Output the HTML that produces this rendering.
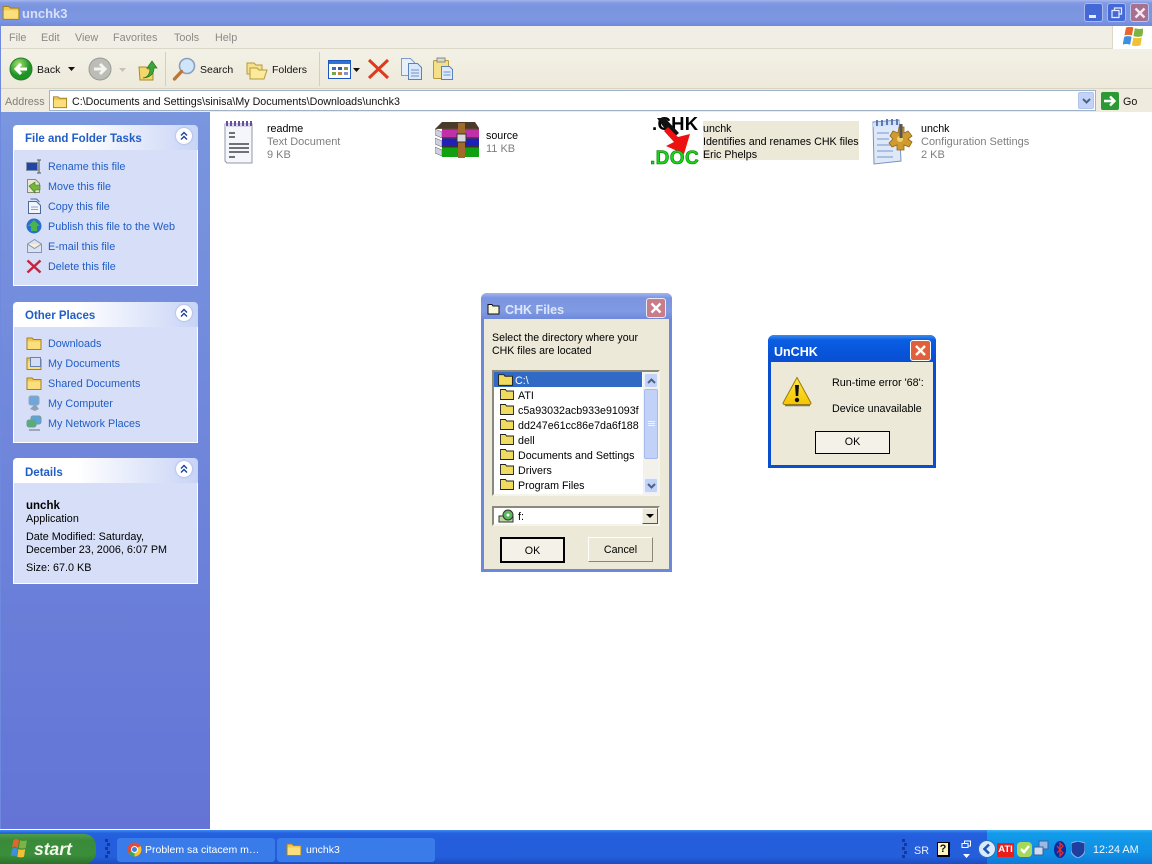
<!DOCTYPE html>
<html><head><meta charset="utf-8"><title>unchk3</title>
<style>
html,body{margin:0;padding:0;width:1152px;height:864px;overflow:hidden;background:#fff}
body{position:relative;font-family:"Liberation Sans",sans-serif;font-size:10.7px;color:#000}
div,span,svg{position:absolute}
.t{white-space:nowrap;line-height:14px;margin-top:1px}
.m{color:#8a8a86;top:30px;font-size:10.8px}
.tb{top:62px;font-size:10.5px;color:#111}
.p{left:13px;width:185px;background:#d6dff7;border:solid #fff;border-width:0 1px 1px 1px;box-sizing:border-box}
.ph{left:13px;width:185px;height:25px;background:linear-gradient(90deg,#fff 0,#fff 35%,#c8d4f6 100%);border-radius:4px 4px 0 0}
.pt{left:25px;font-weight:bold;color:#215dc6;font-size:11.5px}
.l{left:48px;color:#215dc6;font-size:10.8px}
.chev{left:176px;width:16px;height:16px;background:#fff;border-radius:50%;box-shadow:0 0 2px #8fa3dc}
.g{color:#7f7f7f;font-size:11px}
.d{font-size:10.8px}
.btn{background:#f3f1e8;border:1px solid #000;box-sizing:border-box;text-align:center;font-size:10.7px}
</style></head>
<body>
<svg width="0" height="0" style="position:absolute">
<symbol id="fld" viewBox="0 0 16 16"><path d="M1 3h5l1.500 1.500H15v10H1z" fill="#f2c94e" stroke="#a5801f"/><path d="M1.500 6.500h13v7.500h-13z" fill="#fbdf7c"/></symbol>
<symbol id="y" viewBox="0 0 14 12"><path d="M.5 1.500h5l1 1.500h7v8.500H.5z" fill="#eedb60" stroke="#222" stroke-width=".9"/></symbol>
<symbol id="chv" viewBox="0 0 16 16"><path d="M5 7.500l3-3 3 3M5 11.500l3-3 3 3" fill="none" stroke="#1d3f9c" stroke-width="1.400"/></symbol>
</svg>

<!-- window frame -->
<div style="left:0;top:0;width:1152px;height:830px;background:#6f89de"></div>
<div style="left:1px;top:112px;width:209px;height:717px;background:linear-gradient(180deg,#7a96df,#6374d6)"></div>
<div style="left:210px;top:112px;width:942px;height:717px;background:#fff"></div>
<div style="left:0;top:829px;width:1152px;height:1px;background:#fff"></div>
<div style="left:0;top:0;width:1152px;height:26px;background:linear-gradient(180deg,#a4b6ee 0,#8099e2 3px,#7b94df 8px,#7c97e2 20px,#7089dc 26px)"></div>
<svg style="left:2px;top:3px" width="18" height="18"><use href="#fld"/></svg>
<div class="t" style="left:22px;top:6px;color:#d8e0f8;font-weight:bold;font-size:13px">unchk3</div>

<!-- window buttons -->
<div style="left:1084px;top:3px;width:19px;height:19px;background:#4468d6;border:1px solid #a9b9ee;border-radius:3px;box-sizing:border-box"><div style="left:4px;top:11px;width:7px;height:3px;background:#e8edfb"></div></div>
<div style="left:1107px;top:3px;width:19px;height:19px;background:#4468d6;border:1px solid #a9b9ee;border-radius:3px;box-sizing:border-box"><svg style="left:3px;top:3px" width="12" height="12"><path d="M3.500 3V1h7v6H8M1 3.500h7v7H1z" fill="none" stroke="#e8edfb" stroke-width="1.200"/></svg></div>
<div style="left:1130px;top:3px;width:19px;height:19px;background:#a8708f;border:1px solid #b9c4ee;border-radius:3px;box-sizing:border-box"><svg style="left:3px;top:3px" width="12" height="12"><path d="M1.500 1.500l9 9M10.500 1.500l-9 9" stroke="#f2e8ee" stroke-width="2.400"/></svg></div>

<!-- menu -->
<div style="left:1px;top:26px;width:1151px;height:23px;background:#f1efe5;border-bottom:1px solid #dcd9c9;box-sizing:border-box"></div>
<div class="t m" style="left:9px">File</div>
<div class="t m" style="left:41px">Edit</div>
<div class="t m" style="left:75px">View</div>
<div class="t m" style="left:113px">Favorites</div>
<div class="t m" style="left:174px">Tools</div>
<div class="t m" style="left:215px">Help</div>
<div style="left:1112px;top:26px;width:40px;height:23px;background:#fff;border-left:1px solid #dcd9c9"></div>
<svg style="left:1123px;top:27px" width="20" height="19" viewBox="2 2.500 13.500 14.500" preserveAspectRatio="none"><path d="M4 3q3-1.500 5 0l-1 6q-3-1-5 0z" fill="#e8652b"/><path d="M10 3.500q3 1 6 0l-1 6q-3 1-6 0z" fill="#7cb342"/><path d="M2.800 10q3-1 5 0l-1 6q-3-1-5 0z" fill="#3f8fe0"/><path d="M9 10.500q3 1 5.800 0l-1 6q-3 1-5.800 0z" fill="#f2c037"/></svg>

<!-- toolbar -->
<div style="left:1px;top:49px;width:1151px;height:40px;background:linear-gradient(180deg,#f3f1e6,#edeadb);border-bottom:1px solid #d8d5c5;box-sizing:border-box"></div>
<svg style="left:9px;top:57px" width="24" height="24"><defs><radialGradient id="gr" cx=".4" cy=".3"><stop offset="0" stop-color="#a8e36f"/><stop offset="1" stop-color="#1f9426"/></radialGradient></defs><circle cx="12" cy="12" r="11" fill="url(#gr)" stroke="#2a7d2a"/><path d="M18 12H8M12 7l-5 5 5 5" fill="none" stroke="#fff" stroke-width="3"/></svg>
<div class="t tb" style="left:37px">Back</div>
<svg style="left:68px;top:67px" width="7" height="5"><path d="M0 0h7L3.500 4z" fill="#111"/></svg>
<svg style="left:88px;top:57px" width="24" height="24"><circle cx="12" cy="12" r="11" fill="#bdbdb8" stroke="#9a9a96"/><path d="M6 12h10M12 7l5 5-5 5" fill="none" stroke="#f4f4f0" stroke-width="3"/></svg>
<svg style="left:119px;top:68px" width="7" height="4"><path d="M0 0h7L3.500 4z" fill="#c5c3b8"/></svg>
<svg style="left:137px;top:57px" width="22" height="24"><path d="M2 10h7l2 2h5v11H3z" fill="#f3d66c" stroke="#a98a2b"/><path d="M6 21q7-1 7-10h-3l5-7 5 7h-3q0 9-11 10z" fill="#3da63a" stroke="#1e7a22" stroke-width=".7"/></svg>
<div style="left:165px;top:52px;width:1px;height:34px;background:#d2cfbe"></div>
<svg style="left:172px;top:57px" width="25" height="25"><circle cx="15" cy="9" r="7.500" fill="#cfe6fa" stroke="#8b9fc0" stroke-width="1.600"/><path d="M9.500 14.500L2.500 22" stroke="#b9773a" stroke-width="3.400" stroke-linecap="round"/></svg>
<div class="t tb" style="left:200px">Search</div>
<svg style="left:245px;top:59px" width="24" height="22" viewBox="0 0 24 22"><path d="M2 4h7l2 2h6v9H2z" fill="#f6e08c" stroke="#b59a3c"/><path d="M5 9h7l2 2h8l-3 9H5z" fill="#fbe99c" stroke="#b59a3c"/></svg>
<div class="t tb" style="left:272px">Folders</div>
<div style="left:319px;top:52px;width:1px;height:34px;background:#d2cfbe"></div>
<svg style="left:328px;top:60px" width="23" height="19"><rect x=".5" y=".5" width="22" height="18" fill="#fff" stroke="#1c56b8"/><rect x="1" y="1" width="21" height="3" fill="#2d74d8"/><g fill="#3f6ec0"><rect x="4" y="7" width="4" height="3"/><rect x="4" y="12" width="4" height="3" fill="#78a84a"/><rect x="10" y="7" width="4" height="3" fill="#3856b0"/><rect x="10" y="12" width="4" height="3" fill="#c2883a"/><rect x="16" y="7" width="4" height="3" fill="#7a9a44"/><rect x="16" y="12" width="4" height="3" fill="#8d8fc4"/></g></svg>
<svg style="left:353px;top:68px" width="7" height="5"><path d="M0 0h7L3.500 4z" fill="#111"/></svg>
<svg style="left:367px;top:58px" width="23" height="22"><path d="M2 2l19 18M21 2L2 20" stroke="#dd3a1e" stroke-width="3"/></svg>
<svg style="left:400px;top:57px" width="23" height="24"><path d="M1.500 1.500h9l4 4v13h-13z" fill="#e8f0fb" stroke="#7d9ccb"/><path d="M8.500 6.500h9l4 4v12h-13z" fill="#dbe8f9" stroke="#5d82ba"/><path d="M11 13h8M11 16h8M11 19h8" stroke="#6d92c8"/></svg>
<svg style="left:432px;top:57px" width="23" height="24"><rect x="1.500" y="3.500" width="15" height="18" rx="1" fill="#f5e08a" stroke="#b59a3c"/><rect x="5" y="1" width="8" height="4" fill="#d8d8d0" stroke="#8a8a80"/><path d="M9.500 9.500h8l3 3v10h-11z" fill="#dfeafa" stroke="#5d82ba"/><path d="M11.500 15h7M11.500 18h7" stroke="#6d92c8"/></svg>

<!-- address -->
<div style="left:1px;top:89px;width:1151px;height:23px;background:#efecdf"></div>
<div class="t" style="left:5px;top:94px;color:#7f7f7a;font-size:10.8px">Address</div>
<div style="left:49px;top:90px;width:1047px;height:21px;background:#fff;border:1px solid #9fb3c6;box-sizing:border-box"></div>
<svg style="left:52px;top:94px" width="16" height="15"><use href="#fld"/></svg>
<div class="t" style="left:72px;top:94px;font-size:10.7px;color:#111">C:\Documents and Settings\sinisa\My Documents\Downloads\unchk3</div>
<div style="left:1078px;top:92px;width:16px;height:17px;background:#c3d3f8;border:1px solid #b0c4ee;box-sizing:border-box;border-radius:2px"><svg style="left:3px;top:5px" width="9" height="6"><path d="M1 1l3.500 3.500L8 1" fill="none" stroke="#4d6185" stroke-width="2"/></svg></div>
<svg style="left:1101px;top:92px" width="18" height="18"><rect width="18" height="18" rx="2" fill="#2b9a35"/><path d="M3 9h10M9 4.500L13.500 9 9 13.500" fill="none" stroke="#fff" stroke-width="2.400"/></svg>
<div class="t" style="left:1123px;top:94px;font-size:10.7px;color:#111">Go</div>

<!-- task panel 1 -->
<div class="ph" style="top:125px"></div>
<div class="t pt" style="top:131px">File and Folder Tasks</div>
<div class="chev" style="top:128px"><svg style="left:0;top:0" width="16" height="16"><use href="#chv"/></svg></div>
<div class="p" style="top:150px;height:136px"></div>
<svg style="left:26px;top:159px" width="17" height="15"><rect x="0.500" y="3.500" width="11" height="8" fill="#2244a8" stroke="#8090a8"/><path d="M13 1v13M11 1h4M11 14h4" stroke="#6d6d6d" fill="none" stroke-width="1.300"/></svg>
<div class="t l" style="top:159px">Rename this file</div>
<svg style="left:26px;top:178px" width="16" height="16"><path d="M1.500 1.500h8l4 4v9h-12z" fill="#e9e6d6" stroke="#8a8a70"/><path d="M3 8l6-4v3h5v5H9v3z" fill="#74b53a" stroke="#3d7b1e" stroke-width=".6"/></svg>
<div class="t l" style="top:179px">Move this file</div>
<svg style="left:27px;top:198px" width="15" height="17"><path d="M1.500 3.500h8l4 4v8h-12z" fill="#f1f5fb" stroke="#4a6898"/><path d="M3.500 1h6l3 3" fill="none" stroke="#4a6898"/><path d="M4 9h7M4 11.500h7" stroke="#8aa4cc"/></svg>
<div class="t l" style="top:199px">Copy this file</div>
<svg style="left:26px;top:218px" width="16" height="16"><circle cx="8" cy="8" r="7.500" fill="#2a6fc8"/><path d="M8 2l6 6h-3v5H5V8H2z" fill="#49b54a"/></svg>
<div class="t l" style="top:219px">Publish this file to the Web</div>
<svg style="left:27px;top:239px" width="15" height="14"><path d="M.5 5L7.500 .5l7 4.500v8.500H.5z" fill="#d8e2f2" stroke="#8a94b0"/><path d="M.5 5l7 4.500 7-4.500" fill="#f6efd8" stroke="#8a94b0"/></svg>
<div class="t l" style="top:239px">E-mail this file</div>
<svg style="left:26px;top:259px" width="16" height="15"><path d="M1.500 1.500l13 12M14.500 1.500l-13 12" stroke="#c9243f" stroke-width="2.500"/></svg>
<div class="t l" style="top:259px">Delete this file</div>

<!-- panel 2 -->
<div class="ph" style="top:302px"></div>
<div class="t pt" style="top:308px">Other Places</div>
<div class="chev" style="top:305px"><svg style="left:0;top:0" width="16" height="16"><use href="#chv"/></svg></div>
<div class="p" style="top:327px;height:116px"></div>
<svg style="left:26px;top:335px" width="16" height="16"><use href="#fld"/></svg>
<div class="t l" style="top:336px">Downloads</div>
<svg style="left:26px;top:355px" width="16" height="16"><use href="#fld"/></svg><div style="left:30px;top:357px;width:9px;height:8px;background:#d4def2;border:1px solid #6882b0"></div>
<div class="t l" style="top:356px">My Documents</div>
<svg style="left:26px;top:375px" width="16" height="16"><use href="#fld"/></svg>
<div class="t l" style="top:376px">Shared Documents</div>
<svg style="left:28px;top:395px" width="13" height="17"><rect x="1" y="1" width="10" height="9" rx="2" fill="#6fa6dc" stroke="#93a7bd"/><path d="M2 14l4-4h2l3 4-4 2z" fill="#8da2b8"/></svg>
<div class="t l" style="top:396px">My Computer</div>
<svg style="left:26px;top:415px" width="16" height="17"><rect x="5" y="1" width="10" height="8" rx="2" fill="#56a8d8" stroke="#7d93a8"/><rect x="1" y="5" width="9" height="7" rx="2" fill="#52b070" stroke="#7d93a8"/><path d="M3 14h11v2H3z" fill="#9aa8b8"/></svg>
<div class="t l" style="top:416px">My Network Places</div>

<!-- panel 3 -->
<div class="ph" style="top:458px"></div>
<div class="t pt" style="top:465px">Details</div>
<div class="chev" style="top:461px"><svg style="left:0;top:0" width="16" height="16"><use href="#chv"/></svg></div>
<div class="p" style="top:483px;height:101px"></div>
<div class="t" style="left:26px;top:498px;font-weight:bold;font-size:11.5px">unchk</div>
<div class="t d" style="left:26px;top:511px">Application</div>
<div class="t d" style="left:26px;top:529px">Date Modified: Saturday,</div>
<div class="t d" style="left:26px;top:542px">December 23, 2006, 6:07 PM</div>
<div class="t d" style="left:26px;top:560px">Size: 67.0 KB</div>

<!-- files -->
<svg style="left:222px;top:119px" width="34" height="46" viewBox="0 0 34 46"><path d="M3 5h27v39H5l-2-2z" fill="#f4f6fb" stroke="#8f97a8"/><path d="M3 5h27v3H3z" fill="#d8d8e6"/><g stroke="#6a4fa0" stroke-width="2"><path d="M5 2v5M9 2v5M13 2v5M17 2v5M21 2v5M25 2v5M29 2v5" /></g><g stroke="#222" stroke-width="1.300"><path d="M7 14h6M7 18h6M7 25h20M7 29h20M7 33h20M7 38h6"/></g></svg>
<div class="t" style="left:267px;top:121px">readme</div>
<div class="t g" style="left:267px;top:134px">Text Document</div>
<div class="t g" style="left:267px;top:147px">9 KB</div>

<svg style="left:435px;top:121px" width="45" height="38" viewBox="0 0 45 38"><path d="M0 8L7 1h33l4 6z" fill="#4a3a2a"/><path d="M0 8l7 3v6l-7-3zM0 17l7 3v6l-7-3zM0 26l7 3v6l-7-3z" fill="#cfcfe0" stroke="#555" stroke-width=".5"/><rect x="7" y="8" width="37" height="9" fill="#c030a8"/><rect x="7" y="17" width="37" height="9" fill="#2020b8"/><rect x="7" y="26" width="37" height="10" fill="#10a010"/><rect x="7" y="7" width="37" height="1.500" fill="#5a4030"/><rect x="7" y="16" width="37" height="1.500" fill="#5a4030"/><rect x="7" y="25" width="37" height="1.500" fill="#333"/><rect x="23" y="2" width="7" height="35" fill="#a06a2a"/><rect x="22" y="13" width="9" height="8" fill="#d8d8d8" stroke="#333"/></svg>
<div class="t" style="left:486px;top:128px">source</div>
<div class="t g" style="left:486px;top:141px">11 KB</div>

<div style="left:703px;top:121px;width:156px;height:39px;background:#ece9d8"></div>
<div class="t" style="left:652px;top:112px;font-weight:bold;font-size:18.5px;letter-spacing:.3px;color:#000;line-height:22px">.CHK</div>
<svg style="left:652px;top:117px" width="46" height="40"><path d="M5 1h8l14 15-7 6z" fill="#111"/><path d="M16 10l10 10 12-3-6 20-18-8 8-4-10-11z" fill="#ee1111"/></svg>
<div class="t" style="left:650px;top:147px;font-weight:bold;font-size:19px;letter-spacing:.4px;color:#19d419;line-height:21px;-webkit-text-stroke:.6px #0a7a0a">.DOC</div>
<div class="t" style="left:703px;top:121px">unchk</div>
<div class="t" style="left:703px;top:134px">Identifies and renames CHK files</div>
<div class="t" style="left:703px;top:147px">Eric Phelps</div>

<svg style="left:869px;top:118px" width="47" height="48" viewBox="0 0 47 48"><path d="M4 4l26-2 2 41-27 3z" fill="#dfe8f8" stroke="#7c92bf"/><path d="M4 5l26-2v4L4 9z" fill="#cfe0f6"/><g stroke="#4f6fb4" stroke-width="1.800"><path d="M8 2v6M13 2v6M18 1v6M23 1v6M28 1v6"/></g><g stroke="#8aa6d8" stroke-width="1.200"><path d="M8 15h12M8 21h12M8 27h16M8 33h16M8 39h16"/></g><path d="M30 9h5v6l4-2 4 5-4 3 4 3-3 5-5-2v5h-7v-5l-5 2-3-4 4-4-3-3 3-5 5 2z" fill="#d09a2e" stroke="#8f6414" stroke-width=".8"/><circle cx="31" cy="21" r="3" fill="#f0d070"/><rect x="30.500" y="6" width="3" height="14" fill="#555"/></svg>
<div class="t" style="left:921px;top:121px">unchk</div>
<div class="t g" style="left:921px;top:134px">Configuration Settings</div>
<div class="t g" style="left:921px;top:147px">2 KB</div>

<!-- CHK dialog -->
<div style="left:481px;top:293px;width:191px;height:279px;background:#6d87db;border-radius:6px 6px 0 0"></div>
<div style="left:481px;top:293px;width:191px;height:26px;background:linear-gradient(180deg,#a3b5ee,#7b94df 5px,#7f9be3 18px,#7089dc);border-radius:6px 6px 0 0"></div>
<div style="left:484px;top:319px;width:185px;height:250px;background:#ece9d8"></div>
<svg style="left:487px;top:303px" width="13" height="12"><path d="M1 1.500h4l1 1.500h6v8H1z" fill="#f8f8d8" stroke="#111"/></svg>
<div class="t" style="left:505px;top:302px;color:#dfe6fa;font-weight:bold;font-size:12.5px">CHK Files</div>
<div style="left:646px;top:298px;width:20px;height:20px;background:#c87d88;border:1px solid #e8eaf6;border-radius:3px;box-sizing:border-box"><svg style="left:3px;top:3px" width="12" height="12"><path d="M1.500 1.500l9 9M10.500 1.500l-9 9" stroke="#fff" stroke-width="2.400"/></svg></div>
<div class="t" style="left:492px;top:330px;font-size:10.6px">Select the directory where your</div>
<div class="t" style="left:492px;top:343px;font-size:10.6px">CHK files are located</div>
<div style="left:492px;top:370px;width:168px;height:126px;background:#fff;border:2px solid;border-color:#8c897c #f5f4ec #f5f4ec #8c897c;box-sizing:border-box;overflow:hidden"></div>
<div style="left:494px;top:372px;width:148px;height:15px;background:#316ac5"></div>
<svg style="left:498px;top:373px" width="15" height="13"><use href="#y"/></svg>
<div class="t" style="left:515px;top:373px;color:#fff">C:\</div>
<svg style="left:500px;top:388px" width="14" height="12"><use href="#y"/></svg><div class="t" style="left:518px;top:388px">ATI</div>
<svg style="left:500px;top:403px" width="14" height="12"><use href="#y"/></svg><div class="t" style="left:518px;top:403px;width:124px;overflow:hidden">c5a93032acb933e91093f</div>
<svg style="left:500px;top:418px" width="14" height="12"><use href="#y"/></svg><div class="t" style="left:518px;top:418px;width:124px;overflow:hidden">dd247e61cc86e7da6f188</div>
<svg style="left:500px;top:433px" width="14" height="12"><use href="#y"/></svg><div class="t" style="left:518px;top:433px">dell</div>
<svg style="left:500px;top:448px" width="14" height="12"><use href="#y"/></svg><div class="t" style="left:518px;top:448px">Documents and Settings</div>
<svg style="left:500px;top:463px" width="14" height="12"><use href="#y"/></svg><div class="t" style="left:518px;top:463px">Drivers</div>
<svg style="left:500px;top:478px" width="14" height="12"><use href="#y"/></svg><div class="t" style="left:518px;top:478px">Program Files</div>
<!-- scrollbar -->
<div style="left:643px;top:372px;width:15px;height:122px;background:#f3f2ea"></div>
<div style="left:644px;top:373px;width:14px;height:15px;background:#c3d3f8;border:1px solid #eaf0fd;box-sizing:border-box;border-radius:2px"><svg style="left:2px;top:4px" width="9" height="6"><path d="M1 5l3.500-3.500L8 5" fill="none" stroke="#4d6185" stroke-width="2"/></svg></div>
<div style="left:644px;top:389px;width:14px;height:70px;background:#c2d1f8;border:1px solid #a6baee;box-sizing:border-box;border-radius:2px"><svg style="left:2px;top:31px" width="9" height="7"><path d="M1 .5h7M1 2.500h7M1 4.500h7" stroke="#eef3fe"/></svg></div>
<div style="left:644px;top:478px;width:14px;height:15px;background:#c3d3f8;border:1px solid #eaf0fd;box-sizing:border-box;border-radius:2px"><svg style="left:2px;top:4px" width="9" height="6"><path d="M1 1l3.500 3.500L8 1" fill="none" stroke="#4d6185" stroke-width="2"/></svg></div>
<!-- combo -->
<div style="left:492px;top:506px;width:168px;height:20px;background:#fff;border:2px solid;border-color:#8c897c #f5f4ec #f5f4ec #8c897c;box-sizing:border-box"></div>
<svg style="left:498px;top:509px" width="17" height="14"><rect x="1" y="7" width="14" height="6" fill="#b8d8a0" stroke="#333"/><circle cx="10" cy="6" r="5" fill="#5cb85c" stroke="#333"/><circle cx="10" cy="6" r="1.500" fill="#fff"/></svg>
<div class="t" style="left:518px;top:509px">f:</div>
<div style="left:642px;top:508px;width:16px;height:16px;background:#ece9d8;border:1px solid;border-color:#f8f8f0 #555 #555 #f8f8f0;box-sizing:border-box"><svg style="left:3px;top:5px" width="9" height="5"><path d="M0 0h8L4 4z" fill="#000"/></svg></div>
<div class="btn" style="left:500px;top:537px;width:65px;height:26px;border-width:2px;line-height:24px">OK</div>
<div class="btn" style="left:588px;top:537px;width:65px;height:25px;border-color:#fff #8a877a #8a877a #fff;line-height:24px;background:#ece9d8">Cancel</div>

<!-- UnCHK dialog -->
<div style="left:768px;top:335px;width:168px;height:133px;background:#0a4ed0;border-radius:6px 6px 0 0"></div>
<div style="left:768px;top:335px;width:168px;height:27px;background:linear-gradient(180deg,#3d8cf0,#0a5ee2 5px,#0754da 18px,#0a4ed0);border-radius:6px 6px 0 0"></div>
<div style="left:771px;top:362px;width:162px;height:103px;background:#ece9d8"></div>
<div class="t" style="left:774px;top:344px;color:#fff;font-weight:bold;font-size:12.5px">UnCHK</div>
<div style="left:910px;top:340px;width:21px;height:21px;background:#e0603c;border:1px solid #fff;border-radius:3px;box-sizing:border-box"><svg style="left:4px;top:4px" width="11" height="11"><path d="M1 1l9 9M10 1l-9 9" stroke="#fff" stroke-width="2.400"/></svg></div>
<svg style="left:782px;top:376px" width="30" height="31"><defs><linearGradient id="wy" x1="0" y1="0" x2="0" y2="1"><stop offset="0" stop-color="#ffe94a"/><stop offset="1" stop-color="#f5c400"/></linearGradient></defs><path d="M15 1.500L29 27q0 1.500-2 1.500H3q-2 0-2-1.500z" fill="url(#wy)" stroke="#9c7a00"/><path d="M3 29.500h25" stroke="#777" stroke-width="1.500"/><path d="M13 9h4l-.8 11h-2.400z" fill="#111"/><circle cx="15" cy="24" r="2.200" fill="#111"/></svg>
<div class="t" style="left:832px;top:375px;font-size:10.8px">Run-time error '68':</div>
<div class="t" style="left:832px;top:401px;font-size:10.7px">Device unavailable</div>
<div class="btn" style="left:815px;top:431px;width:75px;height:23px;line-height:21px;background:#f3f1e8">OK</div>

<!-- taskbar -->
<div style="left:0;top:830px;width:1152px;height:34px;background:linear-gradient(180deg,#3f89ef 0,#2563e0 3px,#245edc 8px,#245edb 27px,#1c4cc0 34px)"></div>
<div style="left:0;top:834px;width:96px;height:30px;background:linear-gradient(180deg,#4f9b4f 0,#3a8a3a 20%,#3a8f3a 70%,#2d6f2d 100%);border-radius:0 12px 12px 0"></div>
<svg style="left:11px;top:839px" width="17" height="19" viewBox="1 3 15 15" preserveAspectRatio="none"><path d="M3 4q3-2 5 0l-1 6q-3-2-5 0z" fill="#e5642a"/><path d="M9 4q3 1 6 0l-1 6q-3 1-6 0z" fill="#7cb342"/><path d="M1.800 11q3-2 5 0l-1 6q-3-2-5 0z" fill="#3f8fe0"/><path d="M7.500 11q3 1 6 0l-1 6q-3 1-6 0z" fill="#f2c037"/></svg>
<div class="t" style="left:34px;top:838px;color:#f4f6ee;font-weight:bold;font-style:italic;font-size:17.5px;line-height:20px">start</div>
<svg style="left:105px;top:838px" width="6" height="24"><g fill="#16389c"><rect y="1" width="3" height="3"/><rect y="5" x="2" width="3" height="3"/><rect y="9" width="3" height="3"/><rect y="13" x="2" width="3" height="3"/><rect y="17" width="3" height="3"/></g></svg>
<div style="left:117px;top:838px;width:158px;height:24px;background:#3a7bea;border-radius:3px"></div>
<svg style="left:127px;top:842px" width="15" height="15"><circle cx="7.500" cy="7.500" r="7" fill="#e24a3a"/><path d="M7.500 7.500L1.500 11a7 7 0 0 0 6 3.500z" fill="#3aa757"/><path d="M7.500 7.500v7a7 7 0 0 0 6-10.500z" fill="#f6c42a"/><circle cx="7.500" cy="7.500" r="3" fill="#3b82e0" stroke="#fff"/></svg>
<div class="t" style="left:145px;top:842px;color:#fff;font-size:10.5px">Problem sa citacem m…</div>
<div style="left:277px;top:838px;width:158px;height:24px;background:#3a7bea;border-radius:3px"></div>
<svg style="left:286px;top:841px" width="16" height="16"><use href="#fld"/></svg>
<div class="t" style="left:306px;top:842px;color:#fff;font-size:10.5px">unchk3</div>
<svg style="left:902px;top:838px" width="6" height="24"><g fill="#16389c"><rect y="1" width="3" height="3"/><rect y="5" x="2" width="3" height="3"/><rect y="9" width="3" height="3"/><rect y="13" x="2" width="3" height="3"/><rect y="17" width="3" height="3"/></g></svg>
<div class="t" style="left:914px;top:843px;color:#e8f0fe;font-size:10.8px">SR</div>
<div style="left:937px;top:842px;width:13px;height:15px;background:#fdf6c0;border:1px solid #000;box-sizing:border-box;border-width:1px 2px 2px 1px;text-align:center;font-weight:bold;font-size:11px;line-height:12px;color:#111">?</div>
<svg style="left:961px;top:840px" width="11" height="20"><path d="M3.500 3.500V1h6v5H7M1 3.500h6v4H1z" fill="none" stroke="#fff"/><path d="M2 14h7l-3.500 4z" fill="#fff"/></svg>
<div style="left:987px;top:830px;width:165px;height:34px;background:linear-gradient(180deg,#3db4f4 0,#139bea 3px,#0f8fe4 24px,#0e78d6 34px)"></div>
<svg style="left:978px;top:839px" width="18" height="20"><circle cx="9" cy="10" r="8.500" fill="#d9ebfb" stroke="#2b6cc4"/><path d="M11 5.500L6.500 10l4.500 4.500" fill="none" stroke="#1f55b8" stroke-width="2.600"/></svg>
<div class="t" style="left:997px;top:842px;width:17px;height:14px;background:#ea1d1d;color:#fff;font-weight:bold;font-size:9.5px;text-align:center;line-height:14px">ATI</div>
<svg style="left:1016px;top:841px" width="17" height="17"><rect x="1" y="1" width="15" height="15" rx="4" fill="#a8d85a"/><path d="M5 8l3 3 5-6" fill="none" stroke="#fff" stroke-width="2.500"/></svg>
<svg style="left:1033px;top:840px" width="16" height="17"><rect x="6" y="1" width="9" height="8" fill="#9cb9e4" stroke="#3c5f9d"/><rect x="1" y="7" width="9" height="8" fill="#cfdcf0" stroke="#3c5f9d"/></svg>
<svg style="left:1054px;top:841px" width="12" height="17"><ellipse cx="6" cy="8.500" rx="6" ry="8.500" fill="#0c2a9c"/><path d="M3 5l6 7-3 3V2l3 3-6 7" fill="none" stroke="#ea2d2d" stroke-width="1.300"/></svg>
<svg style="left:1071px;top:841px" width="14" height="17"><path d="M7 0l7 2v7q0 5-7 8-7-3-7-8V2z" fill="#1c3fa0" stroke="#8cb4e8"/></svg>
<div class="t" style="left:1093px;top:842px;color:#f4f8ff;font-size:10.8px">12:24 AM</div>
</body></html>
